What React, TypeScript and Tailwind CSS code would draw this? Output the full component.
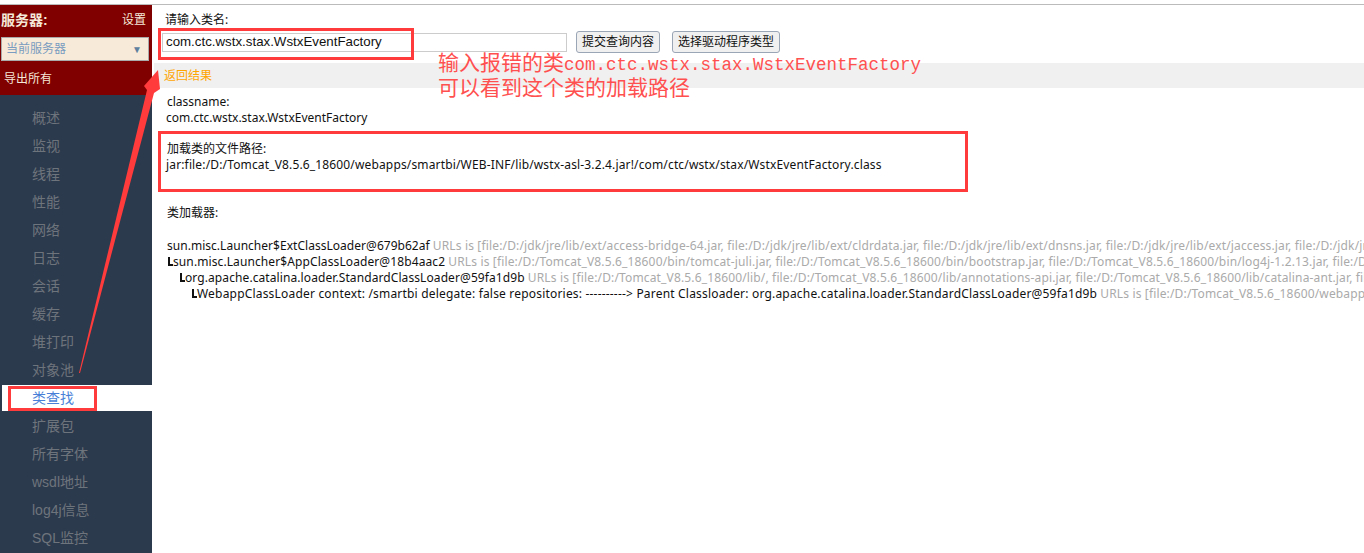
const menu = ['概述', '监视', '线程', '性能', '网络', '日志', '会话', '缓存', '堆打印', '对象池', '类查找', '扩展包', '所有字体', 'wsdl地址', 'log4j信息', 'SQL监控'];

const font = "font-['Liberation_Sans','Noto_Sans_CJK_SC',sans-serif]";

function Corner() {
  return <span className="inline-block h-[9px] w-[5px] border-b-2 border-l-2 border-[#111]" />;
}

function Sidebar() {
  return (
    <div className="w-[152px] shrink-0 bg-[#2c3a4d]">
      <div className="h-[90px] bg-[#800000] pl-[1px] pr-[2px] pt-[7px]">
        <div className="flex items-center justify-between pr-[4px] text-[14px] leading-[16px] text-[#f5e8d8]">
          <span className="font-bold">服务器:</span>
          <span className="text-[12px]">设置</span>
        </div>
        <div className="mt-[9px] flex h-[24px] w-[148px] items-center justify-between border border-[#aaa] bg-[#f8ead8] pl-[4px] pr-[6px] text-[12px] text-[#7a9cc0]">
          <span>当前服务器</span>
          <span className="text-[10px] text-[#5f7f9f]">▼</span>
        </div>
        <div className="mt-[9px] pl-[3px] text-[12px] leading-[18px] text-[#f5e8d8]">导出所有</div>
      </div>
      <ul className="pt-[9px]">
        {menu.map((item) => (
          <li
            key={item}
            className={
              item === '类查找'
                ? 'ml-[2px] my-[1px] flex h-[26px] items-center bg-white pl-[30px] text-[14px] text-[#4a7fd8]'
                : 'flex h-[28px] items-center pl-[32px] text-[14px] text-[#6e747c]'
            }
          >
            {item}
          </li>
        ))}
      </ul>
    </div>
  );
}

function Main() {
  return (
    <div className="min-w-0 flex-1 overflow-hidden pt-[7px] font-['Noto_Sans','Noto_Sans_CJK_SC',sans-serif] text-[12px] leading-[16px] text-[#111]">
      <div className="pl-[13px]">请输入类名:</div>
      <div className="mt-[3px] flex items-center pl-[10px]">
        <div className="flex h-[19px] w-[405px] items-center border border-[#ccc] pl-[3px] font-['Liberation_Sans'] text-[13.3px]">com.ctc.wstx.stax.WstxEventFactory</div>
        <button className="ml-[9px] h-[22px] w-[84px] rounded-[3px] border border-[#9aa5b5] bg-[#f0f0f0] text-[12px]">提交查询内容</button>
        <button className="ml-[12px] h-[22px] w-[108px] rounded-[3px] border border-[#9aa5b5] bg-[#f0f0f0] text-[12px]">选择驱动程序类型</button>
      </div>
      <div className="ml-[2px] mt-[10px] flex h-[25px] items-center bg-[#f0f0f0] pl-[10px] text-[#ffa500]">返回结果</div>
      <div className="pl-[15px] pt-[6px]">
        <p>classname:</p>
        <p className="-ml-[1px]">com.ctc.wstx.stax.WstxEventFactory</p>
        <p className="mt-[15px]">加载类的文件路径:</p>
        <p className="-ml-[1px] tracking-[0.15px]">jar:file:/D:/Tomcat_V8.5.6_18600/webapps/smartbi/WEB-INF/lib/wstx-asl-3.2.4.jar!/com/ctc/wstx/stax/WstxEventFactory.class</p>
        <p className="mt-[32px]">类加载器:</p>
        <div className="mt-[17px] whitespace-nowrap">
          <p><span className="tracking-[0.03px]">sun.misc.Launcher$ExtClassLoader@679b62af</span> <span className="tracking-[0.15px] text-[#aaa]">URLs is [file:/D:/jdk/jre/lib/ext/access-bridge-64.jar, file:/D:/jdk/jre/lib/ext/cldrdata.jar, file:/D:/jdk/jre/lib/ext/dnsns.jar, file:/D:/jdk/jre/lib/ext/jaccess.jar, file:/D:/jdk/jre/lib/ext/jfxrt.jar]</span></p>
          <p className="pl-[1px]"><Corner /><span className="tracking-[0.1px]">sun.misc.Launcher$AppClassLoader@18b4aac2</span> <span className="tracking-[0.15px] text-[#aaa]">URLs is [file:/D:/Tomcat_V8.5.6_18600/bin/tomcat-juli.jar, file:/D:/Tomcat_V8.5.6_18600/bin/bootstrap.jar, file:/D:/Tomcat_V8.5.6_18600/bin/log4j-1.2.13.jar, file:/D:/Tomcat_V8.5.6_18600/bin/x.jar]</span></p>
          <p className="pl-[13px]"><Corner /><span className="tracking-[0.09px]">org.apache.catalina.loader.StandardClassLoader@59fa1d9b</span> <span className="tracking-[0.15px] text-[#aaa]">URLs is [file:/D:/Tomcat_V8.5.6_18600/lib/, file:/D:/Tomcat_V8.5.6_18600/lib/annotations-api.jar, file:/D:/Tomcat_V8.5.6_18600/lib/catalina-ant.jar, file:/D:/Tomcat_V8.5.6_18600/lib/x.jar]</span></p>
          <p className="pl-[25px]"><Corner /><span className="tracking-[0.19px]">WebappClassLoader context: /smartbi delegate: false repositories: ----------&gt; Parent Classloader: org.apache.catalina.loader.StandardClassLoader@59fa1d9b</span> <span className="tracking-[0.15px] text-[#aaa]">URLs is [file:/D:/Tomcat_V8.5.6_18600/webapps/smartbi/WEB-INF/classes/]</span></p>
        </div>
      </div>
    </div>
  );
}

export default function App() {
  return (
    <div className={`relative h-[553px] w-[1364px] overflow-hidden bg-white ${font}`}>
      <div className="h-[5px] border-b border-[#bbb] bg-white" />
      <div className="flex h-[548px]">
        <Sidebar />
        <Main />
      </div>

      {/* annotations drawn over the screenshot */}
      <div className="absolute left-[158px] top-[28px] h-[32px] w-[256px] border-[3px] border-[#ff3b3b]" />
      <div className="absolute left-[158px] top-[131px] h-[61px] w-[810px] border-[3px] border-[#ff3b3b]" />
      <div className="absolute left-[8px] top-[386px] h-[25px] w-[89px] border-[3px] border-[#ff3b3b]" />
      <div className="absolute left-[438px] top-[50px] text-[21px] leading-[25px] text-[#ff5050]">
        <div className="h-[25px] whitespace-nowrap">输入报错的类<span className="font-['Liberation_Mono'] text-[17.5px]">com.ctc.wstx.stax.WstxEventFactory</span></div>
        <div className="whitespace-nowrap">可以看到这个类的加载路径</div>
      </div>
      <svg className="absolute left-[70px] top-[60px]" width="100" height="320" viewBox="0 0 100 320">
        <path d="M9 313 L77 30 L74 26 L88 10 L90 29 L84 33 L10 313 Z" fill="#ff3b3b" />
      </svg>
    </div>
  );
}
